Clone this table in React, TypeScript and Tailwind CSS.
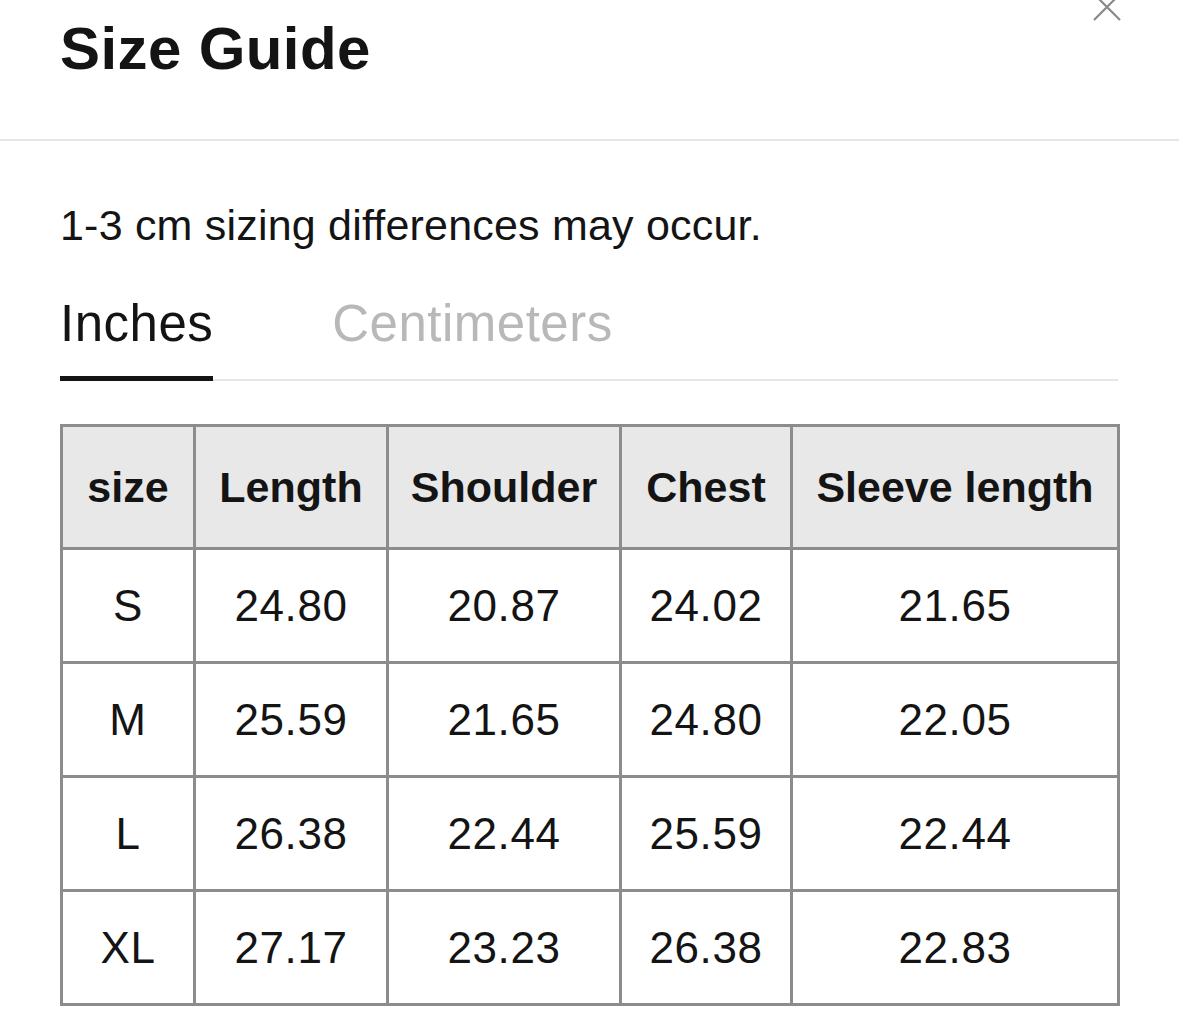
import React, { useState } from "react";

const rows = [
  ["S", "24.80", "20.87", "24.02", "21.65"],
  ["M", "25.59", "21.65", "24.80", "22.05"],
  ["L", "26.38", "22.44", "25.59", "22.44"],
  ["XL", "27.17", "23.23", "26.38", "22.83"],
];

const headers = ["size", "Length", "Shoulder", "Chest", "Sleeve length"];
const widths = ["w-[133px]", "w-[193px]", "w-[233px]", "w-[171px]", "w-[327px]"];

const App = () => {
  const [unit, setUnit] = useState("in");

  return (
    <div
      className="relative w-[1179px] h-[1033px] overflow-hidden bg-white text-[#141414]"
      style={{ fontFamily: '"Liberation Sans", Arial, sans-serif' }}
    >
      {/* header */}
      <div className="h-[139px] px-[60px] pt-[19px]">
        <h1 className="text-[60px] leading-none font-bold tracking-[0.4px]">Size Guide</h1>
      </div>
      <button className="absolute left-[1093px] top-[-7px] w-[28px] h-[28px]">
        <svg viewBox="0 0 28 28" width="28" height="28" fill="none" stroke="#8a8a8a" strokeWidth="2.2">
          <path d="M1 1L27 27M27 1L1 27" />
        </svg>
      </button>
      <div className="h-[2px] bg-[#e6e6e6]" />

      <div className="px-[60px] pr-[61px]">
        <p className="mt-[63px] text-[43px] leading-none tracking-[0.2px]">
          1-3 cm sizing differences may occur.
        </p>

        {/* tabs */}
        <div className="mt-[51px] flex items-end gap-[119px] border-b-[2px] border-[#e6e6e6]">
          <button
            onClick={() => setUnit("in")}
            className={`-mb-[2px] pb-[27px] text-[51px] leading-none tracking-[0.5px] border-b-[5px] ${
              unit === "in" ? "border-[#141414] text-[#141414]" : "border-transparent text-[#b8b8b8]"
            }`}
          >
            Inches
          </button>
          <button
            onClick={() => setUnit("cm")}
            className={`-mb-[2px] pb-[27px] text-[51px] leading-none tracking-[0.5px] border-b-[5px] ${
              unit === "cm" ? "border-[#141414] text-[#141414]" : "border-transparent text-[#b8b8b8]"
            }`}
          >
            Centimeters
          </button>
        </div>

        {/* table */}
        <table className="mt-[43px] w-[1058px] table-fixed border-collapse border-[3px] border-[#8c8c8c] text-center">
          <thead>
            <tr className="h-[123px] bg-[#e8e8e8]">
              {headers.map((h, i) => (
                <th key={h} className={`${widths[i]} border-[3px] border-[#8c8c8c] text-[43px] font-bold`}>
                  {h}
                </th>
              ))}
            </tr>
          </thead>
          <tbody>
            {rows.map((r) => (
              <tr key={r[0]} className="h-[114px]">
                {r.map((c, i) => (
                  <td key={i} className="border-[3px] border-[#8c8c8c] text-[44px] tracking-[0.6px]">
                    {c}
                  </td>
                ))}
              </tr>
            ))}
          </tbody>
        </table>
      </div>
    </div>
  );
};

export default App;
